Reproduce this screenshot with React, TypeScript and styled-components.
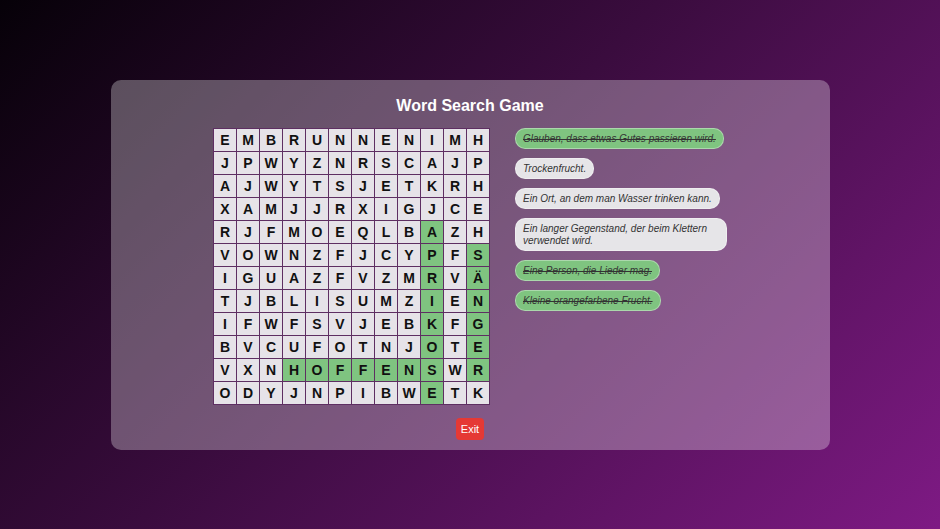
import React from "react";
import styled, { createGlobalStyle } from "styled-components";

const GlobalStyle = createGlobalStyle`
  html, body {
    margin: 0;
    padding: 0;
    height: 100%;
  }
  body {
    font-family: "Liberation Sans", Arial, sans-serif;
    background: linear-gradient(135deg, #060108 0%, #3a0c3e 45%, #7e1a84 100%);
    min-height: 529px;
  }
  #root {
    height: 100%;
  }
`;

const Page = styled.div`
  width: 100%;
  height: 529px;
  display: flex;
  align-items: center;
  justify-content: center;
`;

const Card = styled.div`
  width: 719px;
  height: 370px;
  box-sizing: border-box;
  padding: 16px 20px 8px;
  border-radius: 10px;
  background: rgba(255, 255, 255, 0.3);
  display: flex;
  flex-direction: column;
  align-items: center;
`;

const Title = styled.h2`
  margin: 0 0 13px;
  color: #fff;
  font-size: 16px;
  line-height: 19px;
  font-weight: bold;
`;

const Content = styled.div`
  display: flex;
  gap: 25px;
  align-items: flex-start;
`;

const Grid = styled.div`
  display: grid;
  grid-template-columns: repeat(12, 22px);
  grid-auto-rows: 22px;
  gap: 1px;
  padding: 1px;
  background: #5e2f62;
`;

const Cell = styled.div<{ $found: boolean }>`
  display: flex;
  align-items: center;
  justify-content: center;
  background: ${(p) => (p.$found ? "#7fc480" : "#e6e3e8")};
  color: #111;
  font-size: 14px;
  font-weight: bold;
`;

const Clues = styled.ul`
  list-style: none;
  margin: 0;
  padding: 0;
  width: 212px;
  display: flex;
  flex-direction: column;
  align-items: flex-start;
  gap: 9px;
`;

const Clue = styled.li<{ $done: boolean }>`
  box-sizing: border-box;
  max-width: 212px;
  padding: 4px 7px 3px;
  border-radius: 10px;
  border: 1px solid rgba(255, 255, 255, 0.35);
  background: ${(p) => (p.$done ? "#7fc480" : "#e6e5e8")};
  color: #333;
  font-size: 10px;
  line-height: 12px;
  font-style: italic;
  text-decoration: ${(p) => (p.$done ? "line-through" : "none")};
`;

const ExitButton = styled.button`
  margin-top: 13px;
  border: none;
  border-radius: 4px;
  background: #e53935;
  color: #fff;
  font-family: "Liberation Sans", Arial, sans-serif;
  font-size: 11px;
  line-height: 14px;
  padding: 4px 5px;
  cursor: pointer;
`;

const rows = [
  "EMBRUNNENIMH",
  "JPWYZNRSCAJP",
  "AJWYTSJETKRH",
  "XAMJJRXIGJCE",
  "RJFMOEQLBAZH",
  "VOWNZFJCYPFS",
  "IGUAZFVZMRVÄ",
  "TJBLISUMZIEN",
  "IFWFSVJEBKFG",
  "BVCUFOTNJOTE",
  "VXNHOFFENSWR",
  "ODYJNPIBWETK",
];

// found words: APRIKOSE (col 9, rows 4-11), SÄNGER (col 11, rows 5-10), HOFFEN (row 10, cols 3-8)
const isFound = (r: number, c: number) =>
  (c === 9 && r >= 4 && r <= 11) ||
  (c === 11 && r >= 5 && r <= 10) ||
  (r === 10 && c >= 3 && c <= 8);

const clues = [
  { text: "Glauben, dass etwas Gutes passieren wird.", done: true },
  { text: "Trockenfrucht.", done: false },
  { text: "Ein Ort, an dem man Wasser trinken kann.", done: false },
  { text: "Ein langer Gegenstand, der beim Klettern verwendet wird.", done: false },
  { text: "Eine Person, die Lieder mag.", done: true },
  { text: "Kleine orangefarbene Frucht.", done: true },
];

export default function App() {
  return (
    <>
      <GlobalStyle />
      <Page>
        <Card>
          <Title>Word Search Game</Title>
          <Content>
            <Grid>
              {rows.map((row, r) =>
                Array.from(row).map((ch, c) => (
                  <Cell key={`${r}-${c}`} $found={isFound(r, c)}>
                    {ch}
                  </Cell>
                ))
              )}
            </Grid>
            <Clues>
              {clues.map((clue) => (
                <Clue key={clue.text} $done={clue.done}>
                  {clue.text}
                </Clue>
              ))}
            </Clues>
          </Content>
          <ExitButton>Exit</ExitButton>
        </Card>
      </Page>
    </>
  );
}
